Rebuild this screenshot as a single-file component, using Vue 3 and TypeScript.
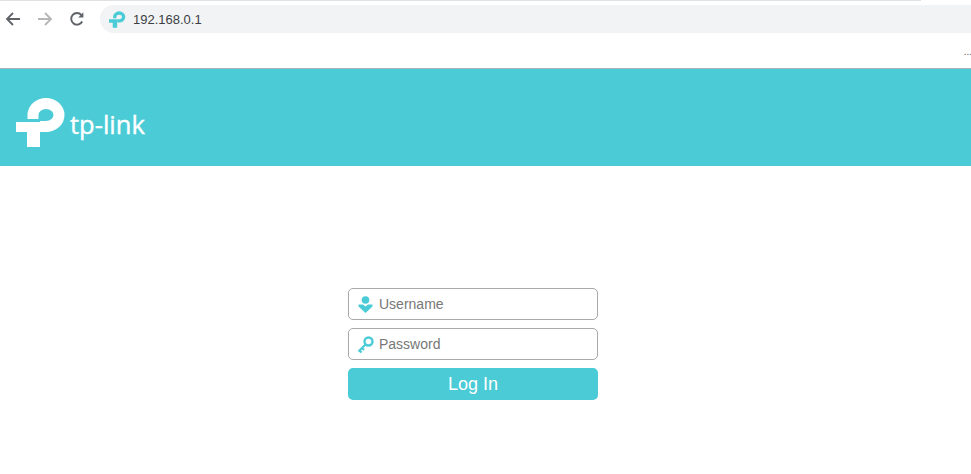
<template>
  <div class="page">
    <div class="browser-bar">
      <div class="top-line"></div>
      <div class="toolbar">
        <button class="nav-btn">
          <svg width="16" height="16" viewBox="0 0 16 16" fill="none" stroke="#5f6368" stroke-width="1.8">
            <path d="M15 8H2M8 2L2 8l6 6" />
          </svg>
        </button>
        <button class="nav-btn nav-forward">
          <svg width="16" height="16" viewBox="0 0 16 16" fill="none" stroke="#b4b6b8" stroke-width="1.8">
            <path d="M1 8h13M8 2l6 6-6 6" />
          </svg>
        </button>
        <button class="nav-btn nav-reload">
          <svg width="16" height="16" viewBox="0 0 16 16" fill="none" stroke="#5f6368" stroke-width="1.9">
            <path d="M13.2 10.500A5.800 5.800 0 1 1 12.400 4" />
            <path d="M14.400 1.200v5.200H9.200z" fill="#5f6368" stroke="none" />
          </svg>
        </button>
        <div class="address">
          <svg class="favicon" width="17" height="17" viewBox="0 0 50 49">
            <path d="M0 24h11v-0h13v25H11V34H0z" fill="#4acbd6" />
            <path d="M17 21V17A13 11.500 0 1 1 30 28.500H24" fill="none" stroke="#4acbd6" stroke-width="10" />
          </svg>
          <span class="url">192.168.0.1</span>
        </div>
      </div>
      <div class="bookmarks"><span class="more">...</span></div>
    </div>

    <header class="banner">
      <svg class="logo-mark" width="50" height="49" viewBox="0 0 50 49">
        <path d="M0 24h24v25H11V34H0z" fill="#fff" />
        <path d="M17 21V17A13 11.500 0 1 1 30 28.500H24" fill="none" stroke="#fff" stroke-width="11" />
      </svg>
      <span class="logo-text">tp-link</span>
    </header>

    <main class="login">
      <form class="login-form" @submit.prevent>
        <label class="field">
          <svg class="field-icon" width="16" height="18" viewBox="0 0 16 18" fill="#4acbd6">
            <circle cx="8" cy="5" r="3.800" />
            <path d="M1 9.500h4.500L8 11.500l2.500-2h4.500v2L8 18 1 11.500z" />
          </svg>
          <input type="text" placeholder="Username" />
        </label>
        <label class="field">
          <svg class="field-icon" width="17" height="17" viewBox="0 0 17 17" fill="none" stroke="#4acbd6">
            <circle cx="11.500" cy="5.500" r="4" stroke-width="2.400" />
            <path d="M8.500 8.500L1.500 15.500M2.500 14.500l2 2M5 12l2 2" stroke-width="2.200" />
          </svg>
          <input type="password" placeholder="Password" />
        </label>
        <button class="login-btn" type="submit">Log In</button>
      </form>
    </main>
  </div>
</template>

<script setup lang="ts">
</script>

<style>
html,
body {
  margin: 0;
  background: #fff;
  overflow: hidden;
}
</style>

<style scoped>
.page {
  width: 971px;
  height: 474px;
  font-family: "Liberation Sans", Arial, sans-serif;
  background: #fff;
}

.browser-bar {
  height: 68px;
  border-bottom: 1px solid #a9b4c0;
}

.top-line {
  width: 921px;
  height: 1px;
  background: #dfe1e3;
}

.toolbar {
  display: flex;
  align-items: center;
  height: 32px;
  padding-top: 4px;
  box-sizing: border-box;
}

.nav-btn {
  width: 16px;
  height: 16px;
  padding: 0;
  margin-left: 5px;
  border: none;
  background: none;
  display: flex;
}

.nav-forward {
  margin-left: 16px;
}

.nav-reload {
  margin-left: 16px;
}

.address {
  flex: 1;
  height: 28px;
  margin-left: 15px;
  display: flex;
  align-items: center;
  background: #f1f3f4;
  border-radius: 14px 0 0 14px;
}

.favicon {
  margin-left: 9px;
}

.url {
  margin-left: 7px;
  font-size: 13px;
  color: #3c4043;
}

.bookmarks {
  height: 35px;
  display: flex;
  justify-content: flex-end;
  align-items: center;
}

.more {
  font-size: 10px;
  line-height: 10px;
  color: #555;
  margin-right: -1px;
  margin-top: 2px;
}

.banner {
  height: 97px;
  background: #4acbd6;
  display: flex;
  align-items: center;
  padding-left: 16px;
  box-sizing: border-box;
}

.logo-mark {
  margin-top: 9px;
}

.logo-text {
  margin-left: 4px;
  margin-top: 13px;
  font-family: "Open Sans", sans-serif;
  font-size: 25.500px;
  -webkit-text-stroke: 0.4px #fff;
  color: #fff;
}

.login {
  display: flex;
  padding: 122px 0 0 348px;
}

.login-form {
  width: 250px;
  display: flex;
  flex-direction: column;
  gap: 8px;
}

.field {
  height: 32px;
  box-sizing: border-box;
  border: 1px solid #a9a9a9;
  border-radius: 5px;
  display: flex;
  align-items: center;
  background: #fff;
}

.field-icon {
  margin-left: 8px;
  width: 17px;
  flex: none;
}

.field input {
  flex: 1;
  min-width: 0;
  border: none;
  outline: none;
  padding: 0;
  margin-left: 5px;
  font-family: "Liberation Sans", Arial, sans-serif;
  font-size: 14px;
  background: transparent;
}

.field input::placeholder {
  color: #777;
  opacity: 1;
}

.login-btn {
  height: 32px;
  border: none;
  border-radius: 5px;
  background: #4acbd6;
  color: #fff;
  font-family: "Liberation Sans", Arial, sans-serif;
  font-size: 18px;
  padding: 0;
}
</style>
